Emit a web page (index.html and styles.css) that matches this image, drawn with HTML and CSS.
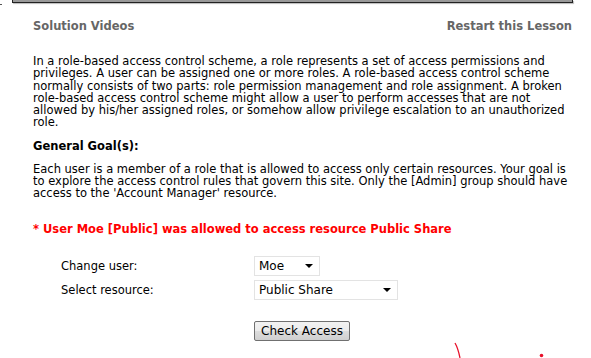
FILE: index.html
```html
<!DOCTYPE html>
<html lang="en">
<head>
    <meta charset="UTF-8">
    <title>Role Based Access Control</title>
    <link rel="stylesheet" href="styles.css">
</head>
<body>
    <div class="corner-mark"></div>
    <div class="top-bar"></div>
    <div class="lesson">
        <div class="lesson-links">
            <a href="#">Solution Videos</a>
            <a href="#">Restart this Lesson</a>
        </div>
        <p class="intro">In a role-based access control scheme, a role represents a set of access permissions and privileges. A user can be assigned one or more roles. A role-based access control scheme normally consists of two parts: role permission management and role assignment. A broken role-based access control scheme might allow a user to perform accesses that are not allowed by his/her assigned roles, or somehow allow privilege escalation to an unauthorized role.</p>
        <h3>General Goal(s):</h3>
        <p class="goal">Each user is a member of a role that is allowed to access only certain resources. Your goal is to explore the access control rules that govern this site. Only the [Admin] group should have access to the 'Account Manager' resource.</p>
        <div class="message">* User Moe [Public] was allowed to access resource Public Share</div>
        <form class="access-form">
            <div class="form-row">
                <label>Change user:</label>
                <div class="select small"><span>Moe</span><i class="arrow"></i></div>
            </div>
            <div class="form-row">
                <label>Select resource:</label>
                <div class="select wide"><span>Public Share</span><i class="arrow"></i></div>
            </div>
            <div class="form-row submit-row">
                <label></label>
                <button type="button">Check Access</button>
            </div>
        </form>
    </div>
    <svg class="doodle" width="591" height="40" viewBox="0 318 591 40">
        <path d="M455 343 C458 348 459 353 460 358" stroke="#e8102a" stroke-width="1.3" fill="none"/>
        <circle cx="541.5" cy="355.5" r="1.8" fill="#e8102a"/>
    </svg>
</body>
</html>
```

FILE: styles.css
```css
body {
    margin: 0;
    font-family: "DejaVu Sans", Verdana, sans-serif;
    font-size: 11.5px;
    color: #000;
    background-color: #fff;
    overflow: hidden;
    position: relative;
    height: 358px;
}

.corner-mark {
    position: absolute;
    left: 0;
    top: 4px;
    width: 2px;
    height: 1px;
    background-color: #555;
}

.top-bar {
    margin: 0 18px 0 12px;
    height: 2px;
    background-color: #999;
    border: 1px solid #222;
    border-top: none;
    box-shadow: 1px 1px 1px #bbb;
}

.lesson {
    padding: 0 19px 0 33px;
}

.lesson-links {
    display: flex;
    justify-content: space-between;
    margin-top: 16px;
}

.lesson-links a {
    color: #666;
    font-weight: bold;
    text-decoration: none;
}

.intro {
    margin: 22px 0 0;
    line-height: 12.3px;
}

h3 {
    font-size: 11.5px;
    margin: 10px 0 0;
}

.goal {
    margin: 10px 0 0;
    line-height: 12.3px;
}

.message {
    color: #ff0000;
    font-weight: bold;
    margin-top: 22px;
}

.access-form {
    margin: 20px 0 0 28px;
}

.form-row {
    display: flex;
    align-items: center;
    margin-bottom: 4px;
}

.form-row label {
    width: 193px;
}

.select {
    height: 18px;
    border: 1px solid #e3e3e3;
    background-color: #fff;
    display: flex;
    align-items: center;
    justify-content: space-between;
    padding: 0 6px 0 4px;
    font-size: 12px;
}

.select.small {
    width: 54px;
}

.select.wide {
    width: 132px;
}

.arrow {
    width: 0;
    height: 0;
    border-left: 4px solid transparent;
    border-right: 4px solid transparent;
    border-top: 4px solid #000;
}

.submit-row {
    margin-top: 21px;
}

.access-form button {
    font-family: "DejaVu Sans", Verdana, sans-serif;
    font-size: 12px;
    height: 20px;
    width: 96px;
    padding: 0;
    border: 1px solid #707070;
    border-radius: 2px;
    background: linear-gradient(#f2f2f2, #ebebeb 50%, #dddddd 50%, #cfcfcf);
    color: #000;
}

.doodle {
    position: absolute;
    left: 0;
    top: 318px;
}
```
